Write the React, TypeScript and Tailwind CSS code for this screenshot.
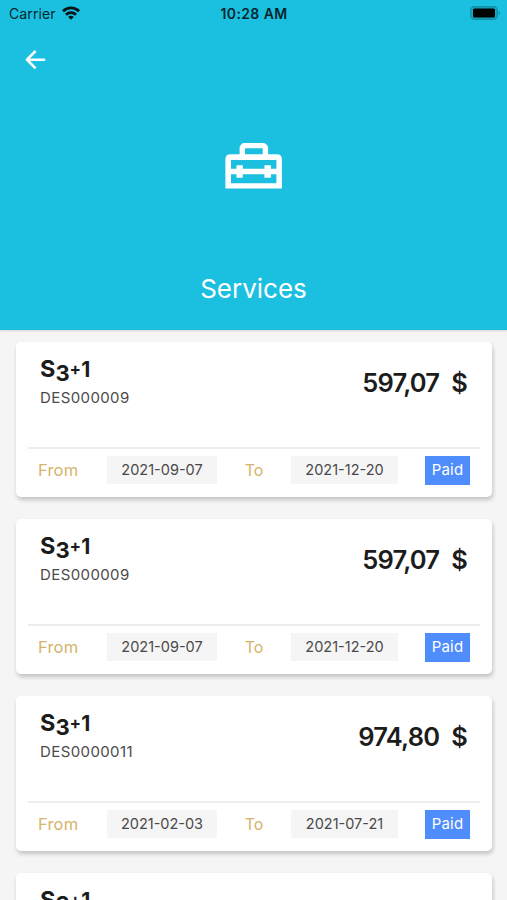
type Service = {
  id: number;
  code: string;
  amount: string;
  from: string;
  to: string;
};

const services: Service[] = [
  { id: 1, code: "DES000009", amount: "597,07", from: "2021-09-07", to: "2021-12-20" },
  { id: 2, code: "DES000009", amount: "597,07", from: "2021-09-07", to: "2021-12-20" },
  { id: 3, code: "DES0000011", amount: "974,80", from: "2021-02-03", to: "2021-07-21" },
  { id: 4, code: "DES0000011", amount: "974,80", from: "2021-02-03", to: "2021-07-21" },
];

function WifiIcon() {
  return (
    <svg className="-mt-[2px] ml-[6px] h-[14px] w-[18px]" viewBox="0 0 18 14" fill="none" stroke="#06161b" strokeWidth="2.8">
      <path d="M1 5.2a11.4 11.4 0 0 1 16 0" />
      <path d="M4 8.7a7.2 7.2 0 0 1 10 0" />
      <path d="M9 13.8 6.2 10.9a3.9 3.9 0 0 1 5.6 0Z" fill="#06161b" stroke="none" />
    </svg>
  );
}

function BatteryIcon() {
  return (
    <svg className="-mt-[1px] h-[14px] w-[31px]" viewBox="0 0 31 14">
      <rect x="0.8" y="0.8" width="26.4" height="12.4" rx="3.6" fill="#17a5c1" stroke="#1190a8" strokeWidth="1.4" />
      <rect x="3" y="2.6" width="22" height="8.8" rx="1.5" fill="#000" />
      <path d="M28.6 4.8c1.8.7 1.8 3.7 0 4.4Z" fill="#1190a8" />
    </svg>
  );
}

function BackIcon() {
  return (
    <svg
      className="h-[20px] w-[21px]"
      viewBox="0 0 21 20"
      fill="none"
      stroke="#fff"
      strokeWidth="2.6"
      strokeLinejoin="round"
    >
      <path d="M20.2 9.7H2.2M10.6 1 1.9 9.7l8.7 8.7" />
    </svg>
  );
}

function ToolboxIcon() {
  return (
    <svg className="h-[46px] w-[57px]" viewBox="0 0 57 46">
      <path
        fill="#fff"
        fillRule="evenodd"
        d="M18.6 0h20q1.2 0 2 .8l1.7 1.7q.8.8.8 2v6.8h8.8q5 0 5 5v29.3H.4V16.3q0-5 5-5h9.2V4.5q0-1.2.8-2l1.5-1.7q.7-.8 1.7-.8ZM20 5.2v6.1h17.7V5.2ZM6 17v8.7h5.5v-3.4h6.3v3.4h21.6v-3.4h6.5v3.4h5.5V17ZM6 31.2v9.1h45.4v-9.1h-5.5v3.6h-6.5v-3.6H17.8v3.6h-6.3v-3.6Z"
      />
    </svg>
  );
}

function ServiceCard({ service }: { service: Service }) {
  return (
    <article className="h-[155px] shrink-0 rounded-[5px] bg-white px-3 shadow-[1px_3px_4px_rgba(0,0,0,0.2)]">
      <div className="flex h-[105px] justify-between pr-[13px] pl-3">
        <div className="pt-3">
          <h2 className="h-[33px] text-[23.5px] leading-[30px] font-bold whitespace-nowrap text-[#1c1c1c]">
            S<span className="align-[-4px] text-[22px] leading-none">3</span>
            <span className="align-[2px] text-[17px] leading-none">+</span>
            <span className="text-[21px] leading-none">1</span>
          </h2>
          <p className="text-[15px] leading-[21px] tracking-[0.4px] text-[#4a4a4a]">{service.code}</p>
        </div>
        <div className="flex gap-[12px] pt-[25px] text-[25.5px] leading-[32px] font-semibold tracking-[-0.8px] text-[#1c1c1c]">
          <span>{service.amount}</span>
          <span>$</span>
        </div>
      </div>
      <div className="h-[2px] bg-[#ededed]" />
      <div className="flex h-[42px] items-center pl-[10px] text-[14.5px]">
        <span className="w-[69px] text-[16.5px] tracking-[0.2px] text-[#d5b469]">From</span>
        <span className="flex h-[28px] w-[110px] items-center justify-center bg-[#f5f5f5] text-[#494949]">
          {service.from}
        </span>
        <span className="w-[74px] text-center text-[16px] text-[#d5b469]">To</span>
        <span className="flex h-[28px] w-[107px] items-center justify-center bg-[#f5f5f5] text-[#494949]">
          {service.to}
        </span>
        <span className="ml-[27px] flex h-[29px] w-[45px] items-center justify-center bg-[#4f8cfc] text-[15px] tracking-[0.2px] text-white">
          Paid
        </span>
      </div>
    </article>
  );
}

export default function App() {
  return (
    <main className="flex h-[900px] w-[507px] flex-col overflow-hidden bg-[#f5f5f5] font-['Inter','Liberation_Sans',sans-serif]">
      <header className="flex h-[330px] shrink-0 flex-col bg-[#1bbfdf] shadow-[0_1px_2px_rgba(0,0,0,0.15)]">
        <div className="grid h-[27px] grid-cols-3 items-center pr-[6px] pl-[9px] text-[14px] text-[#06262e]">
          <div className="flex items-center">
            <span className="tracking-[0.1px]">Carrier</span>
            <WifiIcon />
          </div>
          <span className="pr-[2px] text-center font-semibold tracking-[0.4px]">10:28 AM</span>
          <div className="flex justify-end">
            <BatteryIcon />
          </div>
        </div>
        <button className="mt-[23px] ml-[25px] w-[21px]" aria-label="Back">
          <BackIcon />
        </button>
        <div className="mt-[73px] flex justify-center">
          <ToolboxIcon />
        </div>
        <h1 className="mt-[82px] text-center text-[26px] leading-[36px] font-normal text-white">Services</h1>
      </header>
      <section className="flex flex-col gap-[22px] pt-3 pr-[15px] pl-4">
        {services.map((service) => (
          <ServiceCard key={service.id} service={service} />
        ))}
      </section>
    </main>
  );
}
